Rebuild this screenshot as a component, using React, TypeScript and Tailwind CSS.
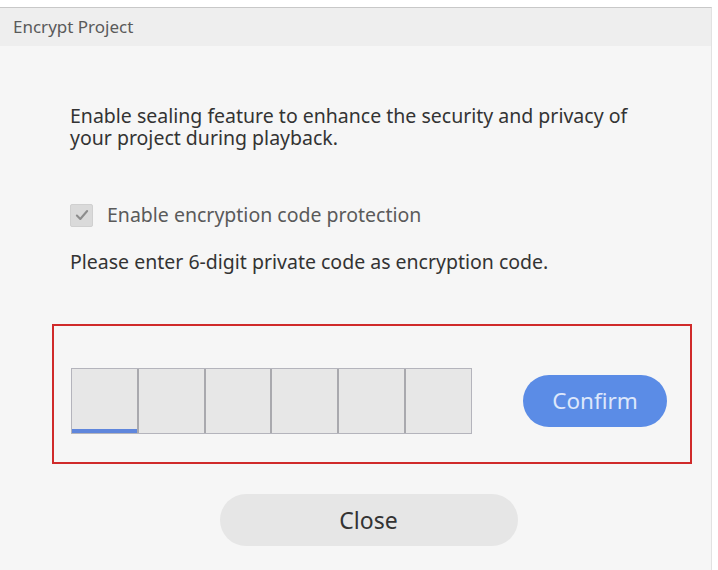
import { useState } from 'react'

// Six-cell code entry used by the encrypt dialog
function CodeBoxes({ active }: { active: number }) {
  return (
    <div className="flex w-[401px] h-[66px] border border-[#b4b4bc] bg-[#e7e7e7]">
      {Array.from({ length: 6 }).map((_, i) => (
        <div
          key={i}
          className={`relative flex-1 h-full ${i > 0 ? 'border-l-2 border-[#a9a9ae]' : ''}`}
        >
          {i === active && <div className="absolute left-0 right-0 bottom-0 h-[4px] bg-[#5f86dc]" />}
        </div>
      ))}
    </div>
  )
}

export default function App() {
  const [enabled, setEnabled] = useState(true)

  return (
    <div className="w-[718px] h-[570px] bg-white pt-[7px] font-['Noto_Sans','Roboto',sans-serif] overflow-hidden">
      <div className="h-[563px] border-t border-[#c8c8c8] border-r border-r-[#e2e2e2] mr-[6px] bg-[#f6f6f6] flex flex-col">
        {/* Title bar */}
        <div className="h-[38px] bg-[#eeeeee] flex items-center pl-[13px] text-[17px] text-[#5a5a5a]">
          Encrypt Project
        </div>

        <div className="flex flex-col pl-[70px] pt-[59px]">
          <p className="w-[565px] text-[19.5px] leading-[22px] text-[#333]">
            Enable sealing feature to enhance the security and privacy of your project during playback.
          </p>

          <label className="flex items-center gap-[14px] mt-[54px] text-[19.5px] leading-[24px] text-[#5a5a5a]">
            <button
              onClick={() => setEnabled(!enabled)}
              className="w-[23px] h-[23px] rounded-[2px] bg-[#dadada] border border-[#d0d0d0] flex items-center justify-center"
            >
              {enabled && (
                <svg width="16" height="16" viewBox="0 0 14 14" fill="none">
                  <path d="M2.5 7.5l3 3 6-7" stroke="#8d8d8d" strokeWidth="1.8" strokeLinecap="round" strokeLinejoin="round" />
                </svg>
              )}
            </button>
            Enable encryption code protection
          </label>

          <p className="mt-[24px] text-[19.5px] leading-[22px] text-[#333]">
            Please enter 6-digit private code as encryption code.
          </p>
        </div>

        {/* Code entry + confirm */}
        <div className="ml-[52px] mt-[51px] w-[640px] h-[140px] border-2 border-[#d02a2a] flex items-center pt-[14px] pl-[17px] pr-[23px] justify-between">
          <CodeBoxes active={0} />
          <button className="w-[144px] h-[52px] rounded-full bg-[#5b8ce6] text-[22.5px] text-[#dde7fb]">
            Confirm
          </button>
        </div>

        <div className="flex justify-center mt-[30px] pl-[26px]">
          <button className="w-[298px] h-[52px] rounded-full bg-[#e6e6e6] text-[23px] text-[#333]">
            Close
          </button>
        </div>
      </div>
    </div>
  )
}
